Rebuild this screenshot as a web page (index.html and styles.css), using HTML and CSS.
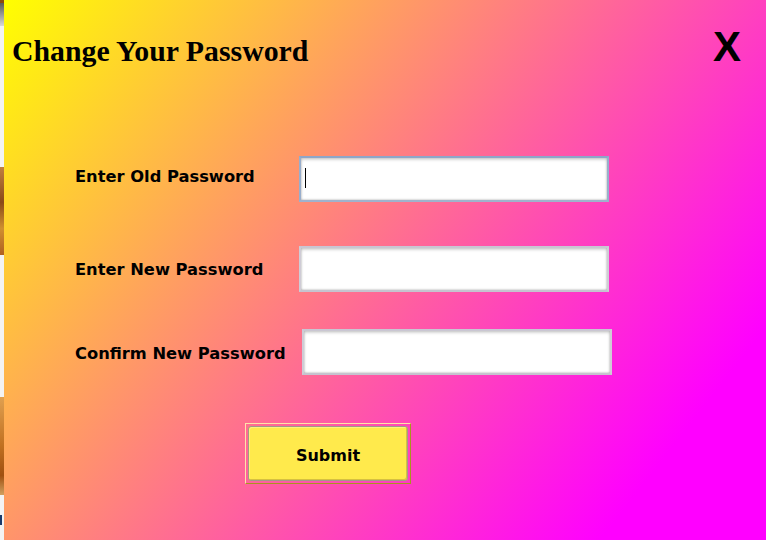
FILE: index.html
```html
<!DOCTYPE html>
<html lang="en">
<head>
<meta charset="utf-8">
<title>Change Your Password</title>
<link rel="stylesheet" href="styles.css">
</head>
<body>
  <div class="backdrop">
    <div class="backdrop__seg backdrop__seg--dark"></div>
    <div class="backdrop__seg backdrop__seg--gap1"></div>
    <div class="backdrop__seg backdrop__seg--photo1"></div>
    <div class="backdrop__seg backdrop__seg--gap2"></div>
    <div class="backdrop__seg backdrop__seg--photo2"></div>
    <div class="backdrop__seg backdrop__seg--gap3"></div>
    <div class="backdrop__seg backdrop__seg--ink"></div>
  </div>
  <main class="panel">
    <header class="panel__header">
      <h1 class="panel__title">Change Your Password</h1>
      <button class="panel__close" type="button" aria-label="Close">X</button>
    </header>
    <form class="form">
      <div class="field field--old">
        <label class="field__label" for="old">Enter Old Password</label>
        <span class="field__control field__control--caret">
          <input class="field__input field__input--active" id="old" type="password">
        </span>
      </div>
      <div class="field field--new">
        <label class="field__label" for="new">Enter New Password</label>
        <span class="field__control">
          <input class="field__input" id="new" type="password">
        </span>
      </div>
      <div class="field field--confirm">
        <label class="field__label" for="confirm">Confirm New Password</label>
        <span class="field__control field__control--shift">
          <input class="field__input" id="confirm" type="password">
        </span>
      </div>
      <div class="form__actions">
        <button class="submit" type="submit"><span class="submit__face">Submit</span></button>
      </div>
    </form>
  </main>
</body>
</html>
```
FILE: styles.css
```css
html, body {
  margin: 0;
  padding: 0;
}

body {
  width: 766px;
  height: 540px;
  overflow: hidden;
  display: flex;
  background: #f3f3f3;
}

.backdrop {
  width: 4px;
  display: flex;
  flex-direction: column;
}

.backdrop__seg--dark {
  height: 26px;
  background: linear-gradient(#8a4a10 0 3px, #5a5a5a 3px, #d8d8d8);
}
.backdrop__seg--gap1 { height: 141px; background: #f3f3f3; }
.backdrop__seg--photo1 {
  height: 88px;
  background: linear-gradient(#c08040, #8a4a18 40%, #d09030 70%, #b06020);
}
.backdrop__seg--gap2 { height: 142px; background: #f3f3f3; }
.backdrop__seg--photo2 {
  height: 98px;
  background: linear-gradient(#e0a050, #c07020 50%, #a05010 80%, #d0a060);
}
.backdrop__seg--gap3 { height: 20px; background: #f3f3f3; }
.backdrop__seg--ink { height: 10px; background: linear-gradient(90deg, #1a3a6a 0 2px, #f3f3f3 2px); }

.panel {
  flex: 1;
  height: 540px;
  box-sizing: border-box;
  padding: 26px 25px 0 8px;
  background: linear-gradient(128deg, #ffff00 0%, #ff00ff 86%);
  display: flex;
  flex-direction: column;
}

.panel__header {
  display: flex;
  justify-content: space-between;
  align-items: baseline;
}

.panel__title {
  margin: 0;
  font-family: "Liberation Serif", "Times New Roman", serif;
  font-weight: bold;
  font-size: 29.8px;
  line-height: 1;
  color: #000;
}

.panel__close {
  margin: 0;
  padding: 0;
  border: 0;
  background: none;
  font-family: "Liberation Sans", Arial, sans-serif;
  font-weight: bold;
  font-size: 42px;
  line-height: 1;
  color: #000;
  cursor: pointer;
}

.form {
  margin: 88px 0 0 63px;
  display: flex;
  flex-direction: column;
}

.field {
  display: flex;
  align-items: center;
}

.field--new { margin-top: 44px; }
.field--confirm { margin-top: 37px; }

.field__label {
  width: 224px;
  font-family: "DejaVu Sans", Verdana, sans-serif;
  font-weight: bold;
  font-size: 16.3px;
  color: #000;
}

.field--old .field__label {
  margin-top: -6px;
}

.field--confirm .field__label {
  margin-top: 3px;
}

.field__control {
  position: relative;
  display: flex;
}

.field__control--shift {
  margin-left: 3px;
}

.field__control--caret::after {
  content: "";
  position: absolute;
  left: 6px;
  top: 12px;
  width: 1px;
  height: 20px;
  background: #000;
}

.field__input {
  width: 310px;
  height: 46px;
  box-sizing: border-box;
  margin: 0;
  padding: 0 5px;
  border: 2px solid;
  border-color: #c9c6d2 #cfccd6 #c6c3cf #cfccd6;
  background: #fff;
  box-shadow: inset 0 2px 3px rgba(0, 0, 0, 0.16), inset 1px 0 2px rgba(0, 0, 0, 0.08), inset -1px 0 2px rgba(0, 0, 0, 0.08), inset 0 -1px 2px rgba(0, 0, 0, 0.1);
  font-family: "DejaVu Sans", sans-serif;
  font-size: 18px;
  outline: none;
}

.field__input--active,
.field__input:focus {
  border-color: #8ea6c8 #98aecd #a0b2cc #98aecd;
}

.form__actions {
  margin: 48px 0 0 170px;
  display: flex;
}

.submit {
  width: 166px;
  height: 61px;
  box-sizing: border-box;
  margin: 0;
  padding: 2px;
  border: 1px solid;
  border-color: #ffe3a8 #a89420 #a89420 #ffe3a8;
  background: transparent;
  display: flex;
  cursor: pointer;
}

.submit__face {
  flex: 1;
  display: flex;
  align-items: center;
  justify-content: center;
  padding-top: 3px;
  background: #ffea4c;
  border: 1px solid #a49a86;
  border-radius: 3px;
  box-shadow: inset -1px -1px 0 #d6c040, inset 1px 1px 0 #fff27a;
  font-family: "DejaVu Sans", Verdana, sans-serif;
  font-weight: bold;
  font-size: 16px;
  color: #000;
}
```
